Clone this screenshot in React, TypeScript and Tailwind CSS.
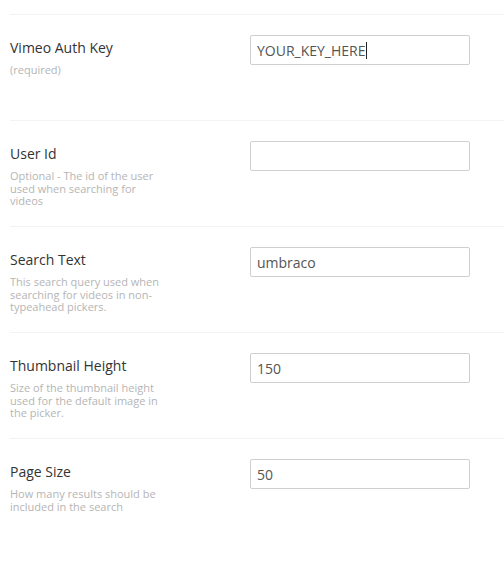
import React from "react";

const rows = [
  { label: "Vimeo Auth Key", desc: "(required)", value: "YOUR_KEY_HERE", caret: true },
  { label: "User Id", desc: "Optional - The id of the user used when searching for videos", value: "" },
  { label: "Search Text", desc: "This search query used when searching for videos in non-typeahead pickers.", value: "umbraco" },
  { label: "Thumbnail Height", desc: "Size of the thumbnail height used for the default image in the picker.", value: "150" },
  { label: "Page Size", desc: "How many results should be included in the search", value: "50" },
];

export default function App() {
  return (
    <div
      className="w-[504px] h-[566px] bg-white pt-[14px] pl-[10px]"
      style={{ fontFamily: '"Open Sans", "Liberation Sans", sans-serif' }}
    >
      {rows.map((r) => (
        <div key={r.label} className="border-t border-[#f3f3f3] h-[106px] flex pt-[20px]">
          <div className="w-[240px] shrink-0">
            <div className="text-[14px] leading-[20px] text-[#333] pt-[3px]">{r.label}</div>
            <div className="w-[150px] text-[11px] leading-[12.5px] text-[#b5b5b5] mt-[6px]">{r.desc}</div>
          </div>
          <div className="w-[220px] h-[30px] border border-[#cfcfcf] rounded-[2px] flex items-center px-[6px] text-[14px] text-[#555]">
            <span>{r.value}</span>
            {r.caret && <span className="inline-block w-[1px] h-[17px] bg-[#222]" />}
          </div>
        </div>
      ))}
    </div>
  );
}
